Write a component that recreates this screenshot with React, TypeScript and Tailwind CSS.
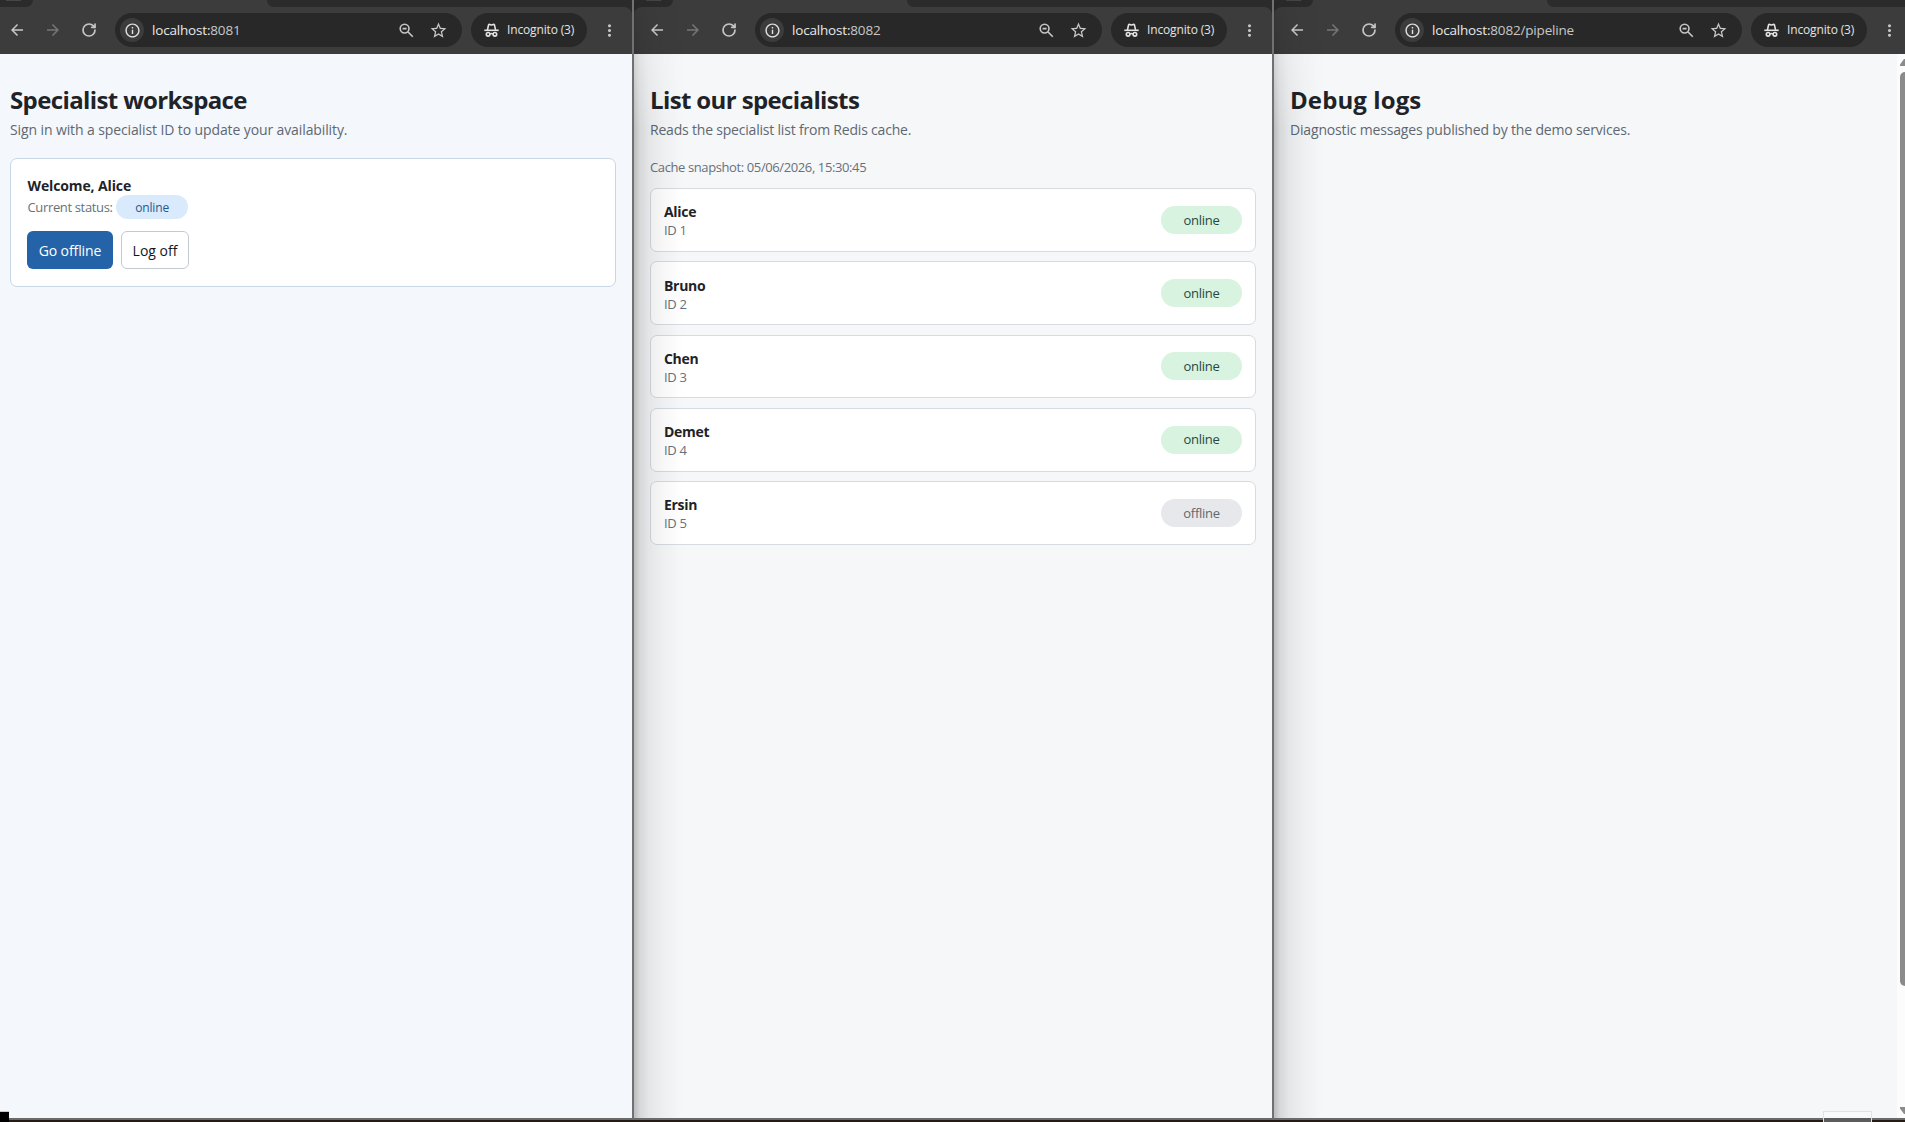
import React from "react";
import { RotateCw } from "lucide-react";
import {
  MdArrowBack,
  MdArrowForward,
  MdInfoOutline,
  MdMoreVert,
  MdStarBorder,
} from "react-icons/md";

type Specialist = { id: number; name: string; status: "online" | "offline" };

const specialists: Specialist[] = [
  { id: 1, name: "Alice", status: "online" },
  { id: 2, name: "Bruno", status: "online" },
  { id: 3, name: "Chen", status: "online" },
  { id: 4, name: "Demet", status: "online" },
  { id: 5, name: "Ersin", status: "offline" },
];

const ZoomOutIcon = () => (
  <svg width="15" height="15" viewBox="0 0 15 15" fill="none" stroke="currentColor" strokeWidth="1.6">
    <circle cx="5.6" cy="5.6" r="4.4" />
    <path d="M8.8 8.8 13.8 13.8M3.6 5.6h4" />
  </svg>
);

// Hat and glasses
const IncognitoIcon = () => (
  <svg width="15" height="15" viewBox="0 0 15 15" fill="none" stroke="currentColor" strokeWidth="1.6">
    <path d="M0.3 7.3h14.4" />
    <path d="M3.4 7.1 4.5 2.2c.15-.7.6-1 1.2-.8l1 .4c.5.2 1.1.2 1.6 0l1-.4c.6-.2 1.05.1 1.2.8l1.1 4.9" />
    <circle cx="4.1" cy="11.3" r="1.8" />
    <circle cx="10.9" cy="11.3" r="1.8" />
    <path d="M5.9 11c.9-.5 2.3-.5 3.2 0" />
  </svg>
);

const BrowserBar = ({ host, path, first }: { host: string; path: string; first?: boolean }) => (
  <header className="h-[54px] shrink-0 overflow-hidden bg-[#2b2b2b] text-[#c7c7c7]">
    {/* Bottom edge of the tab strip */}
    <div className="flex h-[7px] bg-[#3c3c3c]">
      <div className="w-[39px] rounded-br-[7px] bg-[#2b2b2b] pl-3">
        <div className="h-px w-[15px] bg-[#454545]" />
      </div>
      <div className="w-[234px]" />
      <div className="flex-1 rounded-bl-[7px] bg-[#2b2b2b]" />
    </div>
    <div
      className={`flex h-[47px] items-start rounded-tr-lg bg-[#3c3c3c] pl-[5px] pt-1.5 ${
        first ? "" : "rounded-tl-lg"
      }`}
    >
      <div className="mr-2 flex h-[34px] shrink-0 items-center">
        <span className="flex w-9 justify-center">
          <MdArrowBack size={18} />
        </span>
        <span className="flex w-9 justify-center text-[#757575]">
          <MdArrowForward size={18} />
        </span>
        <span className="flex w-9 justify-center">
          <RotateCw size={16} strokeWidth={2.5} />
        </span>
      </div>
      <div className="flex h-[34px] w-[347px] shrink-0 items-center rounded-full bg-[#282828] pl-[5px] pr-[14.5px]">
        <span className="mr-2 flex size-6 items-center justify-center rounded-full bg-[#3c3c3c] text-[#e3e3e3]">
          <MdInfoOutline size={17} />
        </span>
        <span className="flex-1 whitespace-pre text-[13.5px] tracking-[-0.18px] text-[#c7c7c7]">
          <span className="text-[#e8e8e8]">{host}</span>
          {path}
        </span>
        <ZoomOutIcon />
        <MdStarBorder size={19} className="ml-[15px]" />
      </div>
      <div className="ml-[9px] flex h-[34px] w-[116px] shrink-0 items-center gap-2 rounded-full bg-[#282828] pl-[13px] text-[#e3e3e3]">
        <IncognitoIcon />
        <span className="whitespace-nowrap text-xs tracking-[-0.15px]">Incognito (3)</span>
      </div>
      <span className="flex h-[34px] w-11 shrink-0 items-center justify-center">
        <MdMoreVert size={19} />
      </span>
    </div>
  </header>
);

// Shadow that the window on the left casts
const EdgeShadow = () => (
  <div className="pointer-events-none absolute inset-y-0 left-0 w-12 bg-[linear-gradient(to_right,rgba(0,0,0,0.24),rgba(0,0,0,0.13)_12%,rgba(0,0,0,0.07)_30%,rgba(0,0,0,0.03)_60%,transparent)] [mask-image:linear-gradient(to_bottom,rgba(0,0,0,0.3),black_130px)]" />
);

type PageHeadingProps = {
  title: string;
  text: string;
  titleSpacing: string;
  textSpacing: string;
};

const PageHeading = ({ title, text, titleSpacing, textSpacing }: PageHeadingProps) => (
  <div className="whitespace-nowrap">
    <h1 className={`text-2xl font-bold leading-8 text-[#1f2328] ${titleSpacing}`}>{title}</h1>
    <p className={`mt-[3px] text-sm leading-[21px] text-[#5f6871] ${textSpacing}`}>{text}</p>
  </div>
);

const SpecialistRow = ({ specialist }: { specialist: Specialist }) => (
  <li className="flex h-[63.7px] items-center justify-between rounded-[7px] border border-[#d6dbe1] bg-white px-[13px]">
    <div className="pt-px">
      <p className="text-sm font-bold leading-[21px] tracking-[-0.3px] text-[#1f2328]">{specialist.name}</p>
      <p className="text-[13px] leading-[17px] tracking-[-0.35px] text-[#68717a]">ID {specialist.id}</p>
    </div>
    <span
      className={`flex h-7 w-[81px] items-center justify-center rounded-full pt-px text-[13px] tracking-[-0.3px] ${
        specialist.status === "online" ? "bg-[#d8f3df] text-[#1f4a45]" : "bg-[#e6e8eb] text-[#5f6871]"
      }`}
    >
      {specialist.status}
    </span>
  </li>
);

const App: React.FC = () => {
  return (
    <main className="relative flex h-[1122px] w-[1905px] flex-col overflow-hidden bg-[#241c14] font-['Open_Sans','Noto_Sans',sans-serif]">
      <div className="-ml-1.5 flex h-[1118px]">
        {/* Specialist workspace */}
        <section className="flex w-[640px] shrink-0 flex-col border-r-2 border-[#717171] bg-[#f4f7fc]">
          <BrowserBar first host="localhost:" path="8081" />
          <div className="px-4 pt-[30px]">
            <PageHeading
              title="Specialist workspace"
              text="Sign in with a specialist ID to update your availability."
              titleSpacing="tracking-[-0.62px]"
              textSpacing="tracking-[-0.11px]"
            />
            <div className="mt-[18px] w-[606px] rounded-[7px] border border-[#c8d6e6] bg-white px-4 pb-[17px] pt-[17px]">
              <h2 className="pl-[0.5px] text-sm font-bold leading-[19px] tracking-[-0.12px] text-[#1f2328]">
                Welcome, Alice
              </h2>
              <div className="flex h-6 items-center text-[13px] tracking-[-0.35px] text-[#68717a]">
                <span className="pl-[0.5px] pt-px">Current status:</span>
                <span className="ml-[3.5px] flex h-6 w-[72px] items-center justify-center rounded-full bg-[#d9eafd] pt-px text-xs tracking-[-0.15px] text-[#22598f]">
                  online
                </span>
              </div>
              <div className="mt-3 flex gap-2 text-sm">
                <button className="h-[38px] w-[86px] rounded-md bg-[#2563a8] pt-0.5 tracking-[-0.1px] text-white">
                  Go offline
                </button>
                <button className="h-[38px] w-[68px] rounded-md border border-[#c2cad4] bg-white pt-0.5 text-[#14181d]">
                  Log off
                </button>
              </div>
            </div>
          </div>
        </section>

        {/* Specialist list */}
        <section className="relative flex w-[640px] shrink-0 flex-col border-r-2 border-[#717171] bg-[#f5f7f9]">
          <BrowserBar host="localhost:" path="8082" />
          <div className="px-4 pt-[30px]">
            <PageHeading
              title="List our specialists"
              text="Reads the specialist list from Redis cache."
              titleSpacing="tracking-[-0.62px]"
              textSpacing="tracking-[-0.2px]"
            />
            <p className="mt-[17px] text-[13px] leading-5 tracking-[-0.39px] text-[#68717a]">
              Cache snapshot: 05/06/2026, 15:30:45
            </p>
            <ul className="mt-[11px] flex w-[606px] flex-col gap-[9.6px]">
              {specialists.map((s) => (
                <SpecialistRow key={s.id} specialist={s} />
              ))}
            </ul>
          </div>
          <EdgeShadow />
        </section>

        {/* Debug logs */}
        <section className="relative flex w-[640px] shrink-0 flex-col bg-[#f5f7f9]">
          <BrowserBar host="localhost:" path="8082/pipeline" />
          <div className="flex flex-1 justify-between">
            <div className="pl-4 pt-[30px]">
              <PageHeading
                title="Debug logs"
                text="Diagnostic messages published by the demo services."
                titleSpacing="tracking-[0.1px]"
                textSpacing="tracking-[-0.17px]"
              />
            </div>
            <div className="flex w-[17px] flex-col items-start bg-[#fcfcfc] pl-[3px] text-[#8b8b8b]">
              <svg className="mt-[5px]" width="10" height="7" viewBox="0 0 10 7" fill="currentColor">
                <path d="M0 7V5.5L4 0h2l4 5.5V7z" />
              </svg>
              <div className="mt-1.5 h-[914px] w-[10px] rounded-[5px] bg-[#8b8b8b]" />
              <svg className="mt-[121px]" width="10" height="7" viewBox="0 0 10 7" fill="currentColor">
                <path d="M0 0v1.5L4 7h2l4-5.5V0z" />
              </svg>
            </div>
          </div>
          <EdgeShadow />
        </section>
      </div>
      <div className="h-1 border-t-2 border-[#6b6b6b]" />

      {/* Scraps of the desktop over the windows */}
      <div className="absolute bottom-0 left-0 h-[11px] w-[9px] border-t border-[#c9c9c9] bg-black" />
      <div className="absolute bottom-0 left-[1823px] h-[11px] w-[49px] border border-b-0 border-[#e2e2e2] bg-[#f8f9fa]">
        <div className="mt-[6px] h-1 bg-[#5c5c5c]" />
      </div>
    </main>
  );
};

export default App;
